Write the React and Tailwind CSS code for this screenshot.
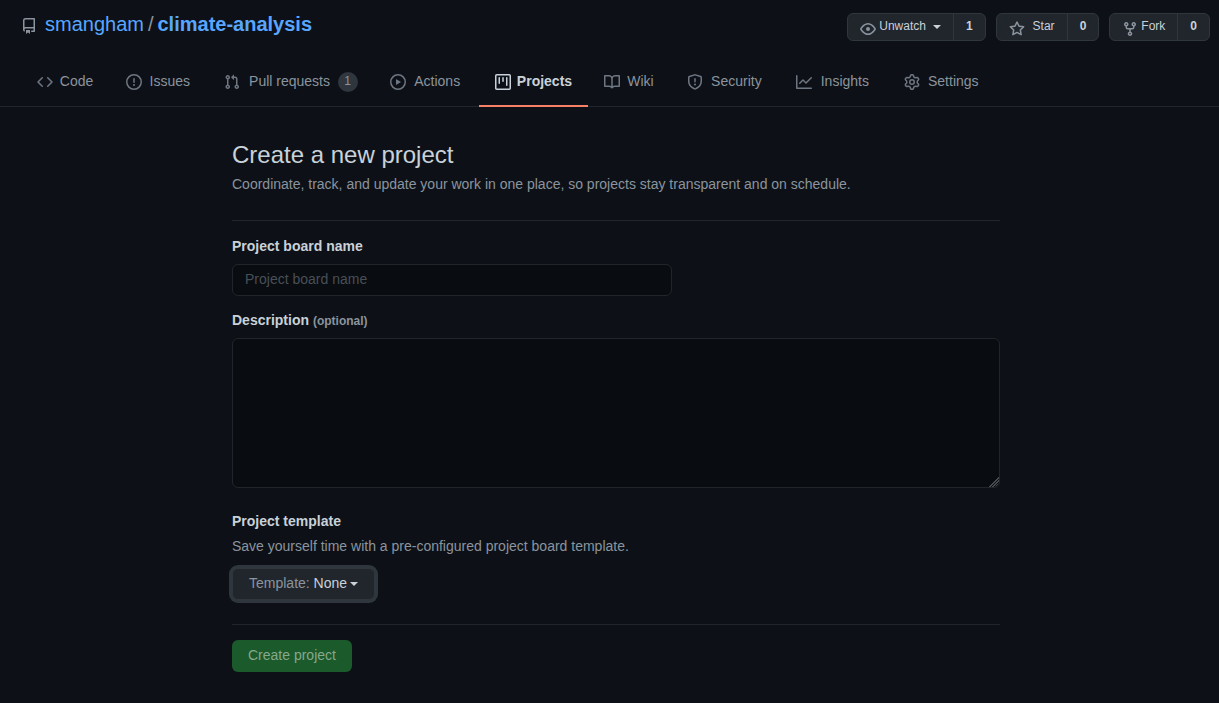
import React from "react";

const paths = {
  repo: "M2 2.5A2.5 2.5 0 014.5 0h8.75a.75.75 0 01.75.75v12.5a.75.75 0 01-.75.75h-2.5a.75.75 0 110-1.5h1.75v-2h-8a1 1 0 00-.714 1.7.75.75 0 01-1.072 1.05A2.495 2.495 0 012 11.5v-9zm10.5-1V9h-8c-.356 0-.694.074-1 .208V2.5a1 1 0 011-1h8zM5 12.25v3.25a.25.25 0 00.4.2l1.45-1.087a.25.25 0 01.3 0L8.6 15.7a.25.25 0 00.4-.2v-3.25a.25.25 0 00-.25-.25h-3.5a.25.25 0 00-.25.25z",
  code: "M4.72 3.22a.75.75 0 011.06 1.06L2.06 8l3.72 3.72a.75.75 0 11-1.06 1.06L.47 8.53a.75.75 0 010-1.06l4.25-4.25zm6.56 0a.75.75 0 10-1.06 1.06L13.94 8l-3.72 3.72a.75.75 0 101.06 1.06l4.25-4.25a.75.75 0 000-1.06l-4.25-4.25z",
  issue: "M8 1.5a6.5 6.5 0 100 13 6.5 6.5 0 000-13zM0 8a8 8 0 1116 0A8 8 0 010 8zm9 3a1 1 0 11-2 0 1 1 0 012 0zm-.25-6.25a.75.75 0 00-1.5 0v3.5a.75.75 0 001.5 0v-3.5z",
  pull: "M7.177 3.073L9.573.677A.25.25 0 0110 .854v4.792a.25.25 0 01-.427.177L7.177 3.427a.25.25 0 010-.354zM3.75 2.5a.75.75 0 100 1.5.75.75 0 000-1.5zm-2.25.75a2.25 2.25 0 113 2.122v5.256a2.251 2.251 0 11-1.5 0V5.372A2.25 2.25 0 011.5 3.25zM11 2.5h-1V4h1a1 1 0 011 1v5.628a2.251 2.251 0 101.5 0V5A2.5 2.5 0 0011 2.5zm1 10.25a.75.75 0 111.5 0 .75.75 0 01-1.5 0zM3.75 12a.75.75 0 100 1.5.75.75 0 000-1.5z",
  play: "M1.5 8a6.5 6.5 0 1113 0 6.5 6.5 0 01-13 0zM8 0a8 8 0 100 16A8 8 0 008 0zM6.379 5.227A.25.25 0 006 5.442v5.117a.25.25 0 00.379.214l4.264-2.559a.25.25 0 000-.428L6.379 5.227z",
  project: "M1.75 0A1.75 1.75 0 000 1.75v12.5C0 15.216.784 16 1.75 16h12.5A1.75 1.75 0 0016 14.25V1.75A1.75 1.75 0 0014.25 0H1.75zM1.5 1.75a.25.25 0 01.25-.25h12.5a.25.25 0 01.25.25v12.5a.25.25 0 01-.25.25H1.75a.25.25 0 01-.25-.25V1.75zM11.75 3a.75.75 0 00-.75.75v7.5a.75.75 0 001.5 0v-7.5a.75.75 0 00-.75-.75zm-8.25.75a.75.75 0 011.5 0v5.5a.75.75 0 01-1.5 0v-5.5zM8 3a.75.75 0 00-.75.75v3.5a.75.75 0 001.5 0v-3.5A.75.75 0 008 3z",
  book: "M0 1.75A.75.75 0 01.75 1h4.253c1.227 0 2.317.59 3 1.501A3.744 3.744 0 0111.006 1h4.245a.75.75 0 01.75.75v10.5a.75.75 0 01-.75.75h-4.507a2.25 2.25 0 00-1.591.659l-.622.621a.75.75 0 01-1.06 0l-.622-.621A2.25 2.25 0 005.258 13H.75a.75.75 0 01-.75-.75V1.75zm8.755 3a2.25 2.25 0 012.25-2.25H14.5v9h-3.757c-.71 0-1.4.201-1.992.572l.004-7.322zm-1.504 7.324l.004-5.073-.002-2.253A2.25 2.25 0 005.003 2.5H1.5v9h3.757a3.75 3.75 0 011.994.574z",
  shield: "M7.467.133a1.75 1.75 0 011.066 0l5.25 1.68A1.75 1.75 0 0115 3.48V7c0 1.566-.32 3.182-1.303 4.682-.983 1.498-2.585 2.813-5.032 3.855a1.7 1.7 0 01-1.33 0c-2.447-1.042-4.049-2.357-5.032-3.855C1.32 10.182 1 8.566 1 7V3.48a1.75 1.75 0 011.217-1.667l5.25-1.68zm.61 1.429a.25.25 0 00-.153 0l-5.25 1.68a.25.25 0 00-.174.238V7c0 1.358.275 2.666 1.057 3.86.784 1.194 2.121 2.34 4.366 3.297a.2.2 0 00.154 0c2.245-.956 3.582-2.104 4.366-3.298C13.225 9.666 13.5 8.36 13.5 7V3.48a.25.25 0 00-.174-.237l-5.25-1.68zM9 10.5a1 1 0 11-2 0 1 1 0 012 0zm-.25-5.75a.75.75 0 10-1.5 0v3a.75.75 0 001.5 0v-3z",
  graph: "M1.5 1.75a.75.75 0 00-1.5 0v12.5c0 .414.336.75.75.75h14.5a.75.75 0 000-1.5H1.5V1.75zm14.28 2.53a.75.75 0 00-1.06-1.06L10 7.94 7.53 5.47a.75.75 0 00-1.06 0L3.22 8.72a.75.75 0 001.06 1.06L7 7.06l2.47 2.47a.75.75 0 001.06 0l5.25-5.25z",
  gear: "M7.429 1.525a6.593 6.593 0 011.142 0c.036.003.108.036.137.146l.289 1.105c.147.56.55.967.997 1.189.174.086.341.183.501.29.417.278.97.423 1.53.27l1.102-.303c.11-.03.175.016.195.046.219.31.41.641.573.989.014.031.022.11-.059.19l-.815.806c-.411.406-.562.957-.53 1.456a4.588 4.588 0 010 .582c-.032.499.119 1.05.53 1.456l.815.806c.08.08.073.159.059.19a6.494 6.494 0 01-.573.99c-.02.029-.086.074-.195.045l-1.103-.303c-.559-.153-1.112-.008-1.529.27-.16.107-.327.204-.5.29-.449.222-.851.628-.998 1.189l-.289 1.105c-.029.11-.101.143-.137.146a6.613 6.613 0 01-1.142 0c-.036-.003-.108-.037-.137-.146l-.289-1.105c-.147-.56-.55-.967-.997-1.189a4.502 4.502 0 01-.501-.29c-.417-.278-.97-.423-1.53-.27l-1.102.303c-.11.03-.175-.016-.195-.046a6.492 6.492 0 01-.573-.989c-.014-.031-.022-.11.059-.19l.815-.806c.411-.406.562-.957.53-1.456a4.587 4.587 0 010-.582c.032-.499-.119-1.05-.53-1.456l-.815-.806c-.08-.08-.073-.159-.059-.19a6.44 6.44 0 01.573-.99c.02-.029.086-.075.195-.045l1.103.303c.559.153 1.112.008 1.529-.27.16-.107.327-.204.5-.29.449-.222.851-.628.998-1.189l.289-1.105c.029-.11.101-.143.137-.146zM8 0c-.236 0-.47.01-.701.03-.743.065-1.29.615-1.458 1.261l-.29 1.106c-.017.066-.078.158-.211.224a5.994 5.994 0 00-.668.386c-.123.082-.233.09-.3.071L3.27 2.776c-.644-.177-1.392.02-1.82.63a7.977 7.977 0 00-.704 1.217c-.315.675-.111 1.422.363 1.891l.815.806c.05.048.098.147.088.294a6.084 6.084 0 000 .772c.01.147-.038.246-.088.294l-.815.806c-.474.469-.678 1.216-.363 1.891.2.428.436.835.704 1.218.428.609 1.176.806 1.82.63l1.103-.303c.066-.019.176-.011.299.071.213.143.436.272.668.386.133.066.194.158.212.224l.289 1.106c.169.646.715 1.196 1.458 1.26a8.094 8.094 0 001.402 0c.743-.064 1.29-.614 1.458-1.26l.29-1.106c.017-.066.078-.158.211-.224a5.98 5.98 0 00.668-.386c.123-.082.233-.09.3-.071l1.102.302c.644.177 1.392-.02 1.82-.63.268-.382.505-.789.704-1.217.315-.675.111-1.422-.364-1.891l-.814-.806c-.05-.048-.098-.147-.088-.294a6.1 6.1 0 000-.772c-.01-.147.039-.246.088-.294l.814-.806c.475-.469.679-1.216.364-1.891a7.992 7.992 0 00-.704-1.218c-.428-.609-1.176-.806-1.82-.63l-1.103.303c-.066.019-.176.011-.299-.071a5.991 5.991 0 00-.668-.386c-.133-.066-.194-.158-.212-.224L10.16 1.29C9.99.645 9.444.095 8.701.031A8.094 8.094 0 008 0zm1.5 8a1.5 1.5 0 11-3 0 1.5 1.5 0 013 0zM11 8a3 3 0 11-6 0 3 3 0 016 0z",
  eye: "M1.679 7.932c.412-.621 1.242-1.75 2.366-2.717C5.175 4.242 6.527 3.5 8 3.5c1.473 0 2.824.742 3.955 1.715 1.124.967 1.954 2.096 2.366 2.717a.119.119 0 010 .136c-.412.621-1.242 1.75-2.366 2.717C10.825 11.758 9.473 12.5 8 12.5c-1.473 0-2.824-.742-3.955-1.715C2.92 9.818 2.09 8.69 1.679 8.068a.119.119 0 010-.136zM8 2c-1.981 0-3.67.992-4.933 2.078C1.797 5.169.88 6.423.43 7.1a1.619 1.619 0 000 1.798c.45.678 1.367 1.932 2.637 3.024C4.329 13.008 6.019 14 8 14c1.981 0 3.67-.992 4.933-2.078 1.27-1.091 2.187-2.345 2.637-3.023a1.619 1.619 0 000-1.798c-.45-.678-1.367-1.932-2.637-3.023C11.671 2.992 9.981 2 8 2zm0 8a2 2 0 100-4 2 2 0 000 4z",
  star: "M8 .25a.75.75 0 01.673.418l1.882 3.815 4.21.612a.75.75 0 01.416 1.279l-3.046 2.97.719 4.192a.75.75 0 01-1.088.791L8 12.347l-3.766 1.98a.75.75 0 01-1.088-.79l.72-4.194L.818 6.374a.75.75 0 01.416-1.28l4.21-.611L7.327.668A.75.75 0 018 .25zm0 2.445L6.615 5.5a.75.75 0 01-.564.41l-3.097.45 2.24 2.184a.75.75 0 01.216.664l-.528 3.084 2.769-1.456a.75.75 0 01.698 0l2.77 1.456-.53-3.084a.75.75 0 01.216-.664l2.24-2.183-3.096-.45a.75.75 0 01-.564-.41L8 2.694v.001z",
  fork: "M5 3.25a.75.75 0 11-1.5 0 .75.75 0 011.5 0zm0 2.122a2.25 2.25 0 10-1.5 0v.878A2.25 2.25 0 005.75 8.5h1.5v2.128a2.251 2.251 0 101.5 0V8.5h1.5a2.25 2.25 0 002.25-2.25v-.878a2.25 2.25 0 10-1.5 0v.878a.75.75 0 01-.75.75h-4.5A.75.75 0 015 6.25v-.878zm3.75 7.378a.75.75 0 11-1.5 0 .75.75 0 011.5 0zm3-8.75a.75.75 0 100-1.5.75.75 0 000 1.5z",
};

function Icon({ name, className = "" }) {
  return (
    <svg viewBox="0 0 16 16" aria-hidden="true" className={`size-4 shrink-0 fill-current ${className}`}>
      <path fillRule="evenodd" d={paths[name]} />
    </svg>
  );
}

function Caret({ className = "" }) {
  return (
    <svg viewBox="0 0 8 4" aria-hidden="true" className={`h-1 w-2 shrink-0 fill-current ${className}`}>
      <path d="M0 0h8L4 4z" />
    </svg>
  );
}

const tabs = [
  { label: "Code", icon: "code" },
  { label: "Issues", icon: "issue" },
  { label: "Pull requests", icon: "pull", count: 1 },
  { label: "Actions", icon: "play" },
  { label: "Projects", icon: "project", current: true },
  { label: "Wiki", icon: "book" },
  { label: "Security", icon: "shield" },
  { label: "Insights", icon: "graph" },
  { label: "Settings", icon: "gear" },
];

// Every label reserves the width of its bold form, so tabs keep their place when selected.
function Tab({ label, icon, count, current }) {
  return (
    <a
      href="#"
      aria-current={current ? "page" : undefined}
      className={`flex items-center border-b-2 px-4 pb-[13px] pt-4 ${
        current ? "border-[#f78166] font-semibold text-[#c9d1d9]" : "border-transparent text-[#8b949e]"
      }`}
    >
      <Icon name={icon} className={current ? "mr-1.5" : "mr-1.5 text-[#6e7681]"} />
      <span
        data-label={label}
        className="pb-0.5 text-center leading-4 after:invisible after:block after:h-0 after:overflow-hidden after:font-semibold after:content-[attr(data-label)]"
      >
        {label}
      </span>
      {count !== undefined && (
        <span className="ml-1 min-w-5 rounded-full bg-[#30363d] px-1.5 pb-0.5 text-center text-xs leading-[18px]">
          {count}
        </span>
      )}
    </a>
  );
}

function SocialButton({ icon, label, count, caret, gap }) {
  return (
    <div className="flex h-7 rounded-md border border-[#30363d] bg-[#21262d] text-xs text-[#c9d1d9]">
      <button type="button" className={`flex items-center px-3 ${gap}`}>
        <Icon name={icon} className="mt-1 text-[#8b949e]" />
        <span className="pb-0.5">{label}</span>
        {caret && <Caret className="ml-1" />}
      </button>
      <a href="#" className="flex items-center border-l border-[#30363d] px-3 pb-0.5 font-semibold">
        {count}
      </a>
    </div>
  );
}

export default function App() {
  return (
    <div className="min-h-screen bg-[#0d1117] font-['Liberation_Sans',Arial,sans-serif] text-sm leading-[21px] text-[#c9d1d9]">
      <header className="border-b border-[#21262d]">
        <div className="flex items-start justify-between pb-[15px] pl-[21px] pr-[9px] pt-[9px]">
          <h1 className="flex items-center text-xl leading-[30px] text-[#58a6ff]">
            <Icon name="repo" className="mr-2 mt-1 text-[#8b949e]" />
            <a href="#">smangham</a>
            <span className="mx-1 text-[#8b949e]">/</span>
            <a href="#" className="font-semibold">climate-analysis</a>
          </h1>
          <div className="mt-1 flex gap-2.5">
            <SocialButton icon="eye" label="Unwatch" count={1} caret gap="gap-[3px]" />
            <SocialButton icon="star" label="Star" count={0} gap="gap-2" />
            <SocialButton icon="fork" label="Fork" count={0} gap="gap-[3px]" />
          </div>
        </div>
        <nav aria-label="Repository" className="-mb-px flex pl-[21px]">
          {tabs.map((tab) => (
            <Tab key={tab.label} {...tab} />
          ))}
        </nav>
      </header>

      <main className="pb-8 pl-[22px] pr-[9px] pt-[30px]">
        <form className="mx-auto max-w-3xl" onSubmit={(e) => e.preventDefault()}>
          <div className="mb-[15px] border-b border-[#21262d] pb-[25px]">
            <h2 className="mb-px text-2xl leading-9">Create a new project</h2>
            <p className="text-[#8b949e]">Coordinate, track, and update your work in one place, so projects stay transparent and on schedule.</p>
          </div>

          <label htmlFor="name" className="block font-semibold">Project board name</label>
          <input
            id="name"
            type="text"
            placeholder="Project board name"
            className="mt-[7px] block h-8 w-full max-w-[440px] rounded-md border border-[#21262d] bg-[#090c10] px-3 pb-0.5 placeholder:text-[#484f58]"
          />

          <label htmlFor="description" className="mt-3.5 block font-semibold">
            Description <span className="text-xs text-[#8b949e]">(optional)</span>
          </label>
          <textarea
            id="description"
            className="mt-[7px] block h-[150px] w-full resize rounded-md border border-[#21262d] bg-[#090c10] px-3 py-2 [color-scheme:dark] [&::-webkit-resizer]:rounded-br-md [&::-webkit-resizer]:bg-[linear-gradient(135deg,#090c10_62%,transparent_62%),repeating-linear-gradient(135deg,#4a4d50_0px,#4a4d50_1px,#090c10_1px,#090c10_2px)]"
          />

          <h3 className="mt-[23px] font-semibold">Project template</h3>
          <p className="mt-1 text-[#8b949e]">Save yourself time with a pre-configured project board template.</p>
          <button
            type="button"
            aria-haspopup="menu"
            className="mt-[11px] flex h-8 items-center gap-[3px] rounded-md border border-[#30363d] bg-[#21262d] px-4 ring-3 ring-[#30363d]"
          >
            <span className="pb-0.5">
              <span className="text-[#8b949e]">Template:</span> None
            </span>
            <Caret />
          </button>

          <div className="mt-6 border-t border-[#21262d] pt-[15px]">
            <button type="submit" disabled className="h-8 rounded-md bg-[#1b5a2a] px-4 pb-0.5 text-[#86a88d]">
              Create project
            </button>
          </div>
        </form>
      </main>
    </div>
  );
}
